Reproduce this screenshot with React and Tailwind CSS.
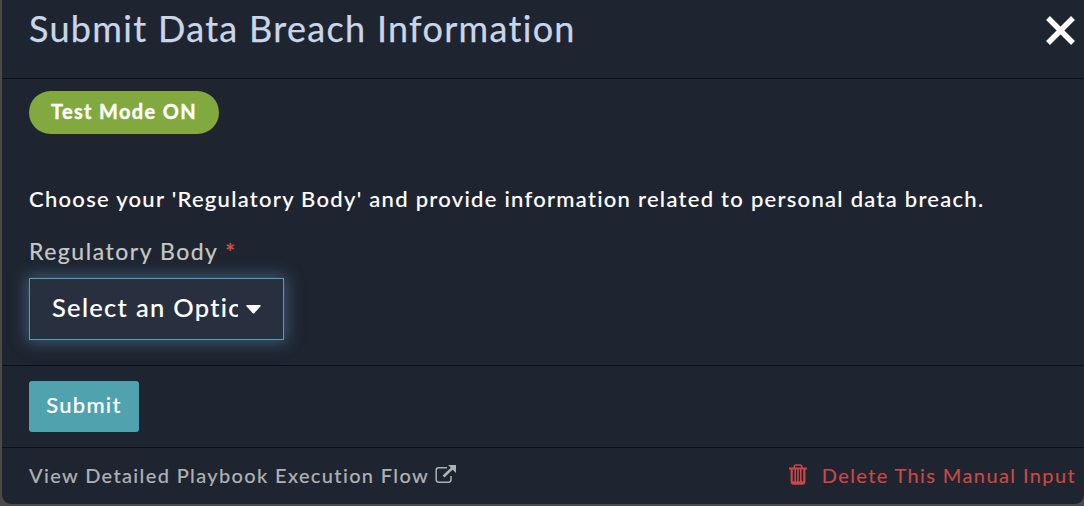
export default function App() {
  return (
    <div className="h-[506px] w-[1084px] overflow-hidden bg-[#4a4a4a] pl-[2px] pb-[2px] font-['Lato',sans-serif]">
      <section className="flex h-[504px] flex-col overflow-hidden rounded-b-[9px] bg-[#1f2530] whitespace-nowrap">
        <header className="flex h-[79px] justify-between border-b border-[#0c1016] pl-[27px] pr-[9px]">
          <h1 className="pt-[6px] text-[36px] leading-[44px] tracking-[1.31px] text-[#c9d6ea] [-webkit-text-stroke:0.25px]">
            Submit Data Breach Information
          </h1>
          <button aria-label="Close" className="mt-[16px] h-[29px] w-[29px]">
            <svg viewBox="0 0 29 29" className="h-[29px] w-[29px]" stroke="#fff" strokeWidth="5.4">
              <path d="M2 2L27 27M27 2L2 27" />
            </svg>
          </button>
        </header>
        <main className="h-[287px] border-b border-[#0c1016] pl-[27px] pt-[12px]">
          <div className="flex h-[43px] w-[190px] items-center justify-center rounded-full bg-[#81a940] pb-[3px] text-[20px] font-bold tracking-[1.35px] text-white [-webkit-text-stroke:0.4px]">
            Test Mode ON
          </div>
          <p className="mt-[51px] text-[22px] leading-[28px] font-medium tracking-[1.28px] text-white [-webkit-text-stroke:0.1px]">
            Choose your 'Regulatory Body' and provide information related to personal data breach.
          </p>
          <label className="mt-[23px] block text-[23px] leading-[30px] tracking-[1.53px] text-[#c8c8c8] [-webkit-text-stroke:0.2px]">
            Regulatory Body <span className="font-bold text-[#d04a46]">*</span>
          </label>
          <button className="mt-[12px] flex h-[62px] w-[255px] items-center border border-[#50a3ae] bg-[#28303f] pl-[22px] text-left text-[25.5px] font-medium tracking-[1.3px] text-white shadow-[0_0_14px_2px_#3d5b7a] [-webkit-text-stroke:0.1px]">
            <span className="w-[186px] overflow-hidden pb-[4px]">Select an Option</span>
            <svg viewBox="0 0 15 9" className="ml-[8px] h-[9px] w-[15px]" fill="#fff">
              <path d="M1 0H14Q15 .5 14.5 1.3L8.5 8Q7.5 9 6.5 8L.5 1.3Q0 .5 1 0Z" />
            </svg>
          </button>
        </main>
        <div className="h-[82px] border-b border-[#0c1016] pl-[27px] pt-[15px]">
          <button className="h-[51px] w-[110px] rounded-[3px] bg-[#50a3ae] pb-[4px] text-[22px] font-medium tracking-[1.25px] text-white [-webkit-text-stroke:0.15px]">
            Submit
          </button>
        </div>
        <footer className="flex h-[56px] items-center justify-between pl-[27px] pr-[8px] pb-[2px] text-[20px]">
          <a className="flex items-center font-medium tracking-[1.35px] text-[#adb0b4] [-webkit-text-stroke:0.1px]">
            <span>View Detailed Playbook Execution Flow</span>
            <svg viewBox="0 0 21 19" className="ml-[6px] mb-[2px] h-[19px] w-[21px]" fill="none" stroke="currentColor">
              <path d="M12 2.8H3.8Q1.2 2.8 1.2 5.3V14.5Q1.2 17.2 3.8 17.2H13.5Q16 17.2 16 14.5V11" strokeWidth="1.5" />
              <path d="M8.5 11.5L17.5 3" strokeWidth="2.6" />
              <path d="M13 0H21V8Z" fill="currentColor" stroke="none" />
            </svg>
          </a>
          <a className="flex items-center tracking-[1.39px] text-[#cb4846] [-webkit-text-stroke:0.15px]">
            <svg viewBox="0 0 18 21" className="mr-[15px] mb-[2px] h-[21px] w-[18px]" fill="none" stroke="currentColor">
              <path d="M5.3 4V2.8Q5.3 1 7 1H11Q12.7 1 12.7 2.8V4" strokeWidth="1.5" />
              <path d="M0 4.5H18" strokeWidth="2" />
              <path d="M2.7 5V17.5Q2.7 19.6 4.8 19.6H13.2Q15.3 19.6 15.3 17.5V5" strokeWidth="2.2" />
              <path d="M6.2 5V18M9 5V18M11.8 5V18" strokeWidth="1.6" />
              <path d="M3 18.7H15" strokeWidth="2.6" />
            </svg>
            <span>Delete This Manual Input</span>
          </a>
        </footer>
      </section>
    </div>
  );
}
